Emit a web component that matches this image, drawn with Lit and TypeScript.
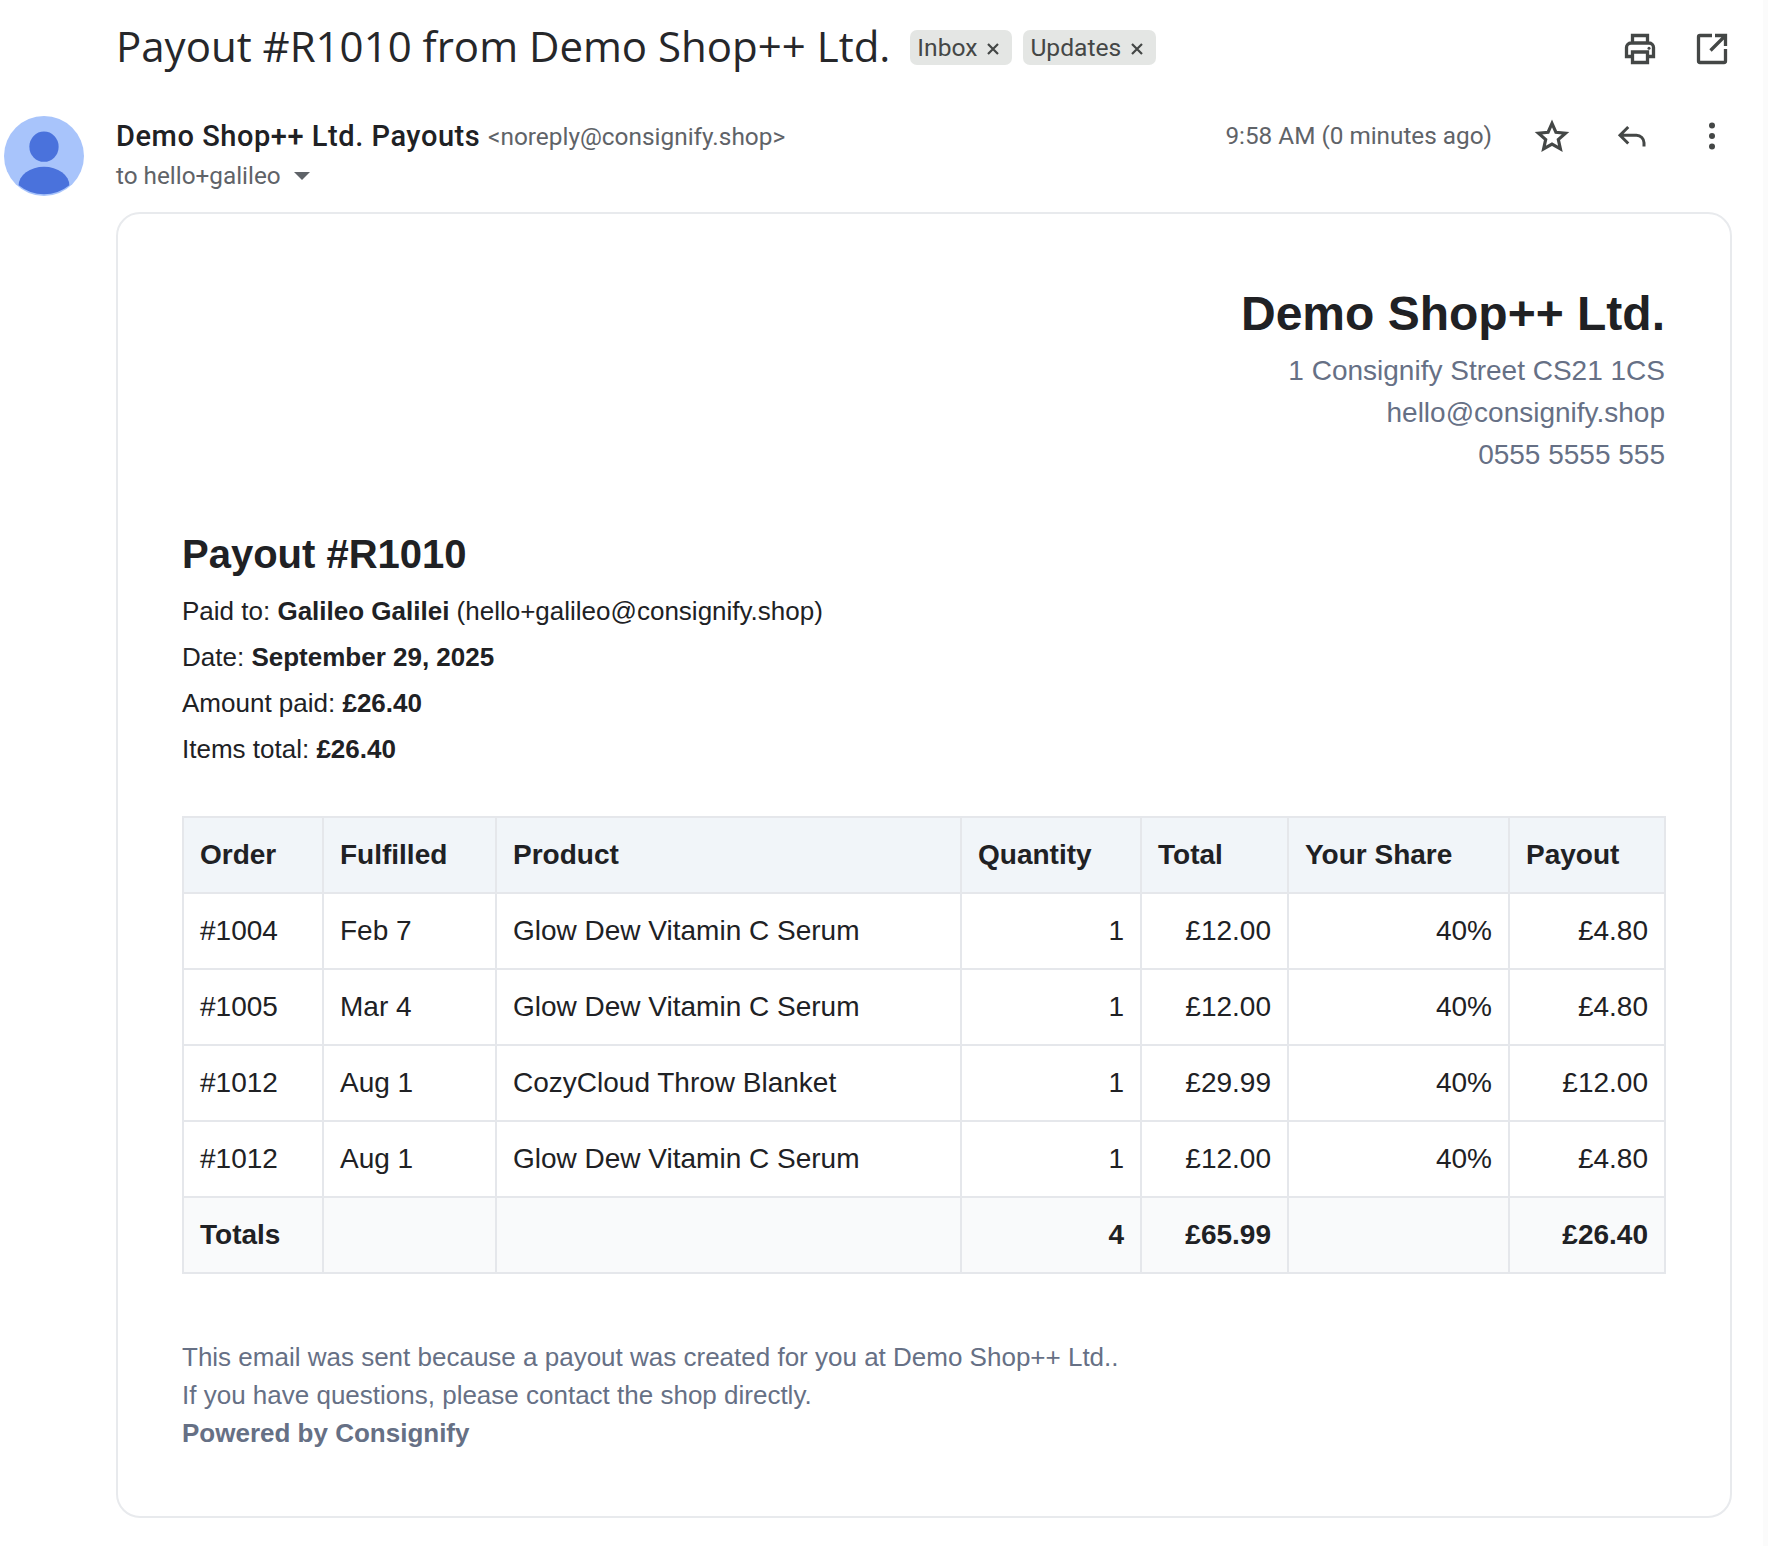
import { LitElement, html, css, svg } from "lit";
import { customElement } from "lit/decorators.js";

const rows = [
  ["#1004", "Feb 7", "Glow Dew Vitamin C Serum", "1", "£12.00", "40%", "£4.80"],
  ["#1005", "Mar 4", "Glow Dew Vitamin C Serum", "1", "£12.00", "40%", "£4.80"],
  ["#1012", "Aug 1", "CozyCloud Throw Blanket", "1", "£29.99", "40%", "£12.00"],
  ["#1012", "Aug 1", "Glow Dew Vitamin C Serum", "1", "£12.00", "40%", "£4.80"],
];
const widths = [140, 173, 465, 180, 147, 221, 156];

@customElement("app-root")
export class AppRoot extends LitElement {
  static styles = css`
    :host { display: block; width: 1768px; height: 1546px; background: linear-gradient(90deg, #fff 1763px, #fbfbfb 1763px); overflow: hidden; font-family: Roboto, "Liberation Sans", sans-serif; color: #202124; }
    .subject-row { display: flex; align-items: center; height: 92px; padding: 0 0 0 116px; }
    .subject { font-family: "Open Sans", sans-serif; font-size: 42px; white-space: nowrap; margin: -2px 20px 0 0; color: #26272a; }
    .chip { display: inline-flex; align-items: center; gap: 9px; height: 35px; padding: 0 12px 0 7px; margin-top: 3px; background: #e4e6e4; border-radius: 7px; font-size: 24.6px; color: #444746; margin-right: 11px; }
    .chip svg { width: 14px; height: 14px; margin-top: 2px; }
    .spacer { flex: 1; }
    .top-actions { display: flex; gap: 36px; padding: 5px 38px 0 0; align-items: center; }
    .head { display: flex; height: 120px; }
    .avatar { width: 80px; height: 80px; margin: 24px 32px 0 4px; flex: none; }
    .who { flex: 1; padding-top: 27px; }
    .from { font-size: 29px; letter-spacing: 0.55px; white-space: nowrap; }
    .from b { font-weight: 500; }
    .from span { font-size: 24.4px; letter-spacing: 0; color: #5f6368; vertical-align: 1px; }
    .to { font-size: 24.3px; color: #5f6368; margin-top: 8px; display: flex; align-items: center; gap: 13px; }
    .caret { width: 0; height: 0; border-left: 8px solid transparent; border-right: 8px solid transparent; border-top: 8px solid #5f6368; }
    .meta { display: flex; align-items: center; height: 40px; margin-top: 24px; padding-right: 38px; }
    .time { font-size: 24.3px; color: #5f6368; margin-right: 42px; padding-bottom: 2px; }
    .meta svg { display: block; }
    .meta .ic { margin-right: 44px; }
    .meta .ic:last-child { margin-right: 0; }
    .card { margin: 0 36px 0 116px; height: 1306px; box-sizing: border-box; border: 2px solid #e8eaed; border-radius: 24px; padding: 67px 65px 0 64px; }
    .shop { text-align: right; color: #667085; font-family: "Liberation Sans", sans-serif; font-size: 28px; line-height: 42px; }
    .shop h1 { margin: 0 0 3px; font-size: 48px; line-height: 66px; color: #202124; font-weight: 700; }
    .pay { margin-top: 49px; font-family: "Liberation Sans", sans-serif; font-size: 26px; line-height: 46px; color: #202124; }
    .pay h2 { margin: 0 0 5px; font-size: 40px; line-height: 58px; }
    table { margin-top: 44px; border-collapse: collapse; table-layout: fixed; width: 1482px; font-family: "Liberation Sans", sans-serif; font-size: 28px; color: #202124; }
    th, td { border: 2px solid #e5e7eb; height: 76px; padding: 0 16px; box-sizing: border-box; text-align: left; }
    thead th { background: #f1f5f9; font-weight: 700; }
    .r { text-align: right; }
    tfoot td { background: #f9fafb; font-weight: 700; }
    .foot { margin-top: 64px; font-family: "Liberation Sans", sans-serif; font-size: 26px; line-height: 38px; color: #667085; }
  `;

  render() {
    return html`
      <div class="subject-row">
        <div class="subject">Payout #R1010 from Demo Shop++ Ltd.</div>
        <span class="chip">Inbox ${this.x()}</span>
        <span class="chip">Updates ${this.x()}</span>
        <div class="spacer"></div>
        <div class="top-actions">
          <svg width="36" height="36" viewBox="0 0 24 24" fill="none" stroke="#444746" stroke-width="2.2"><path d="M7 8V3h10v5M7 17H3v-6a3 3 0 0 1 3-3h12a3 3 0 0 1 3 3v6h-4M7 14h10v7H7z"/><circle cx="18" cy="11.5" r="1" fill="#444746" stroke="none"/></svg>
          <svg width="36" height="36" viewBox="0 0 24 24" fill="none" stroke="#444746" stroke-width="2.2"><path d="M12 3H4a1 1 0 0 0-1 1v16a1 1 0 0 0 1 1h16a1 1 0 0 0 1-1v-8M21 3l-10 10M14 3h7v7"/></svg>
        </div>
      </div>
      <div class="head">
        <svg class="avatar" viewBox="0 0 82 82">
          <circle cx="41" cy="41" r="41" fill="#a8c4fb"/>
          <ellipse cx="41" cy="31.5" rx="15" ry="15.5" fill="#4a72dc"/>
          <path d="M15 71 a26 19 0 0 1 52 0 a41 41 0 0 1 -52 0z" fill="#4a72dc"/>
        </svg>
        <div class="who">
          <div class="from"><b>Demo Shop++ Ltd. Payouts</b> <span>&lt;noreply@consignify.shop&gt;</span></div>
          <div class="to">to hello+galileo <i class="caret"></i></div>
        </div>
        <div class="meta">
          <span class="time">9:58 AM (0 minutes ago)</span>
          <svg class="ic" width="36" height="36" viewBox="0 0 24 24" fill="none" stroke="#444746" stroke-width="2.1" stroke-linejoin="miter"><path d="M12 3.6l2.6 5.9 6.4.6-4.8 4.2 1.4 6.3L12 17.4l-5.6 3.2 1.4-6.3L3 10.1l6.4-.6z"/></svg>
          <svg class="ic" width="36" height="36" viewBox="0 0 24 24" fill="none" stroke="#444746" stroke-width="2"><path d="M9.5 6L4 11.5 9.5 17M4 11.5h11a5 5 0 0 1 5 5V19"/></svg>
          <svg class="ic" width="36" height="36" viewBox="0 0 24 24" fill="#444746"><circle cx="12" cy="5" r="2"/><circle cx="12" cy="12" r="2"/><circle cx="12" cy="19" r="2"/></svg>
        </div>
      </div>
      <div class="card">
        <div class="shop">
          <h1>Demo Shop++ Ltd.</h1>
          <div>1 Consignify Street CS21 1CS</div>
          <div>hello@consignify.shop</div>
          <div>0555 5555 555</div>
        </div>
        <div class="pay">
          <h2>Payout #R1010</h2>
          <div>Paid to: <b>Galileo Galilei</b> (hello+galileo@consignify.shop)</div>
          <div>Date: <b>September 29, 2025</b></div>
          <div>Amount paid: <b>£26.40</b></div>
          <div>Items total: <b>£26.40</b></div>
        </div>
        <table>
          <colgroup>${widths.map((w) => html`<col style="width:${w}px" />`)}</colgroup>
          <thead><tr><th>Order</th><th>Fulfilled</th><th>Product</th><th>Quantity</th><th>Total</th><th>Your Share</th><th>Payout</th></tr></thead>
          <tbody>
            ${rows.map((r) => html`<tr>${r.map((c, i) => html`<td class=${i > 2 ? "r" : ""}>${c}</td>`)}</tr>`)}
          </tbody>
          <tfoot><tr><td>Totals</td><td></td><td></td><td class="r">4</td><td class="r">£65.99</td><td></td><td class="r">£26.40</td></tr></tfoot>
        </table>
        <div class="foot">
          <div>This email was sent because a payout was created for you at Demo Shop++ Ltd..</div>
          <div>If you have questions, please contact the shop directly.</div>
          <div><b>Powered by Consignify</b></div>
        </div>
      </div>
    `;
  }

  x() {
    return html`<svg viewBox="0 0 14 14" fill="none" stroke="#444746" stroke-width="2.2">${svg`<path d="M2 2l10 10M12 2L2 12"/>`}</svg>`;
  }
}
